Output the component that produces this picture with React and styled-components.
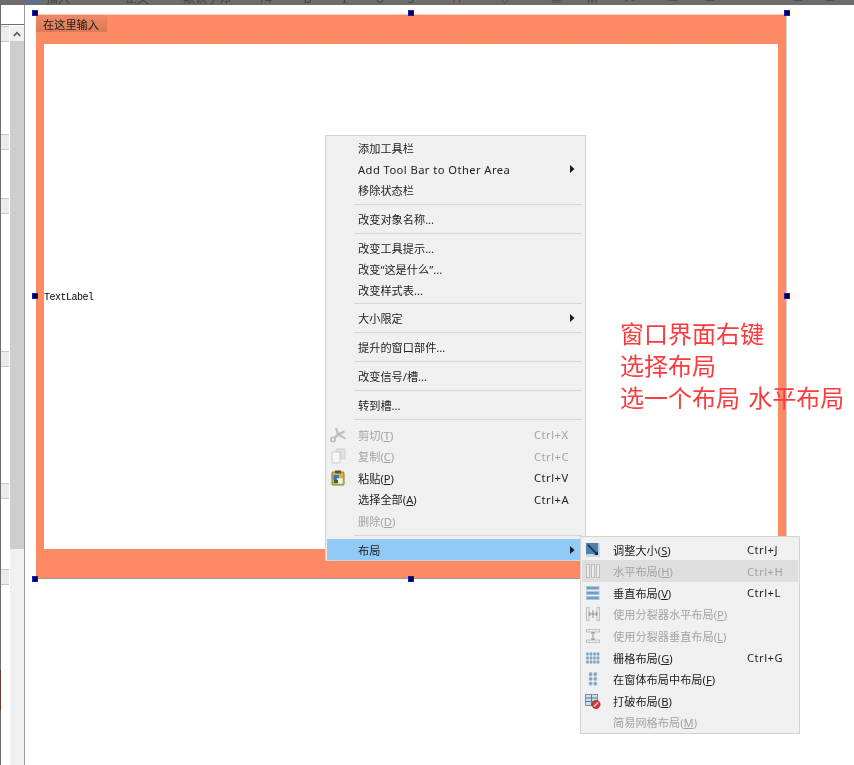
import React from "react";
import styled, { createGlobalStyle } from "styled-components";

const GlobalStyle = createGlobalStyle`
  html, body {
    margin: 0;
    padding: 0;
    background: #fff;
  }
  body {
    font-family: "Noto Sans", "Noto Sans CJK SC", sans-serif;
  }
`;

const Page = styled.div`
  position: relative;
  width: 854px;
  height: 765px;
  overflow: hidden;
  display: flex;
  flex-direction: column;
  background: #fff;
  filter: blur(0.3px);
`;

// ---- clipped toolbar at the very top
const TopBar = styled.div`
  flex: none;
  height: 5px;
  display: flex;
  align-items: flex-end;
  overflow: hidden;
  background: #6c6c6c;
  font-size: 12px;
  line-height: 14px;
`;

const TopItem = styled.span`
  flex: none;
  margin-left: ${(props) => props.$gap}px;
  margin-bottom: -1px;
  white-space: nowrap;
  color: ${(props) => props.$color || "#484848"};
`;

const TopDot = styled.span`
  flex: none;
  width: 15px;
  height: 15px;
  margin-left: 25px;
  border-radius: 50%;
  background: #5d6f8d;
`;

const Body = styled.div`
  flex: 1;
  display: flex;
  min-height: 0;
`;

// ---- left panel with scrollbar
const Sidebar = styled.div`
  flex: none;
  width: 25px;
  display: flex;
  flex-direction: column;
  border-left: 1px solid #6f6f6f;
  border-right: 1px solid #9a9a9a;
  box-sizing: border-box;
  margin-right: 1px;
  position: relative;
`;

const SideInput = styled.div`
  flex: none;
  height: 19px;
  background: #fff;
  border-bottom: 1px solid #6f6f6f;
  margin-bottom: 1px;
`;

const SideBody = styled.div`
  flex: 1;
  display: flex;
  min-height: 0;
`;

const TreeCol = styled.div`
  flex: none;
  width: 8px;
  display: flex;
  flex-direction: column;
`;

const TreeHead = styled.div`
  flex: none;
  height: 16px;
  margin-top: ${(props) => props.$top}px;
  background: #ececec;
  border-top: 1px solid #c8c8c8;
  border-bottom: 1px solid #c8c8c8;
  box-sizing: border-box;
`;

const Scroll = styled.div`
  flex: none;
  width: 14px;
  margin-left: 1px;
  display: flex;
  flex-direction: column;
  background: #f0f0f0;
`;

const ScrollUp = styled.div`
  flex: none;
  height: 15px;
  display: flex;
  align-items: center;
  justify-content: center;
  background: #f0f0f0;
`;

const ScrollThumb = styled.div`
  flex: none;
  height: 508px;
  background: #cdcdcd;
`;

const BrownMark = styled.div`
  position: absolute;
  left: -1px;
  top: 665px;
  width: 1px;
  height: 40px;
  background: #6e3a2c;
`;

// ---- designer canvas
const Canvas = styled.div`
  flex: 1;
  padding: 9px 0 0 10px;
`;

const Form = styled.div`
  position: relative;
  width: 751px;
  height: 565px;
  display: flex;
  flex-direction: column;
  box-sizing: border-box;
  background-color: #ff8a63;
  background-image:
    repeating-linear-gradient(90deg, #b9a59c 0 1px, transparent 1px 9.4px),
    repeating-linear-gradient(90deg, #c9a08e 0 1px, transparent 1px 9.4px);
  background-size: 100% 1px, 100% 1px;
  background-position: 0 21px, 0 538px;
  background-repeat: no-repeat;
  border-top: 1px solid #ffc7b2;
  border-right: 1px solid #cfcfcf;
  border-bottom: 1px solid #a09a98;
`;

const FormMenuBar = styled.div`
  flex: none;
  height: 29px;
`;

const FormMenuTitle = styled.div`
  width: 71px;
  height: 17px;
  box-sizing: border-box;
  padding-left: 7px;
  font-size: 11.2px;
  line-height: 19px;
  color: #1c1c1c;
  background: linear-gradient(180deg, #f08a66 0%, #d97a58 100%);
`;

const Central = styled.div`
  flex: 1;
  margin: 0 8px 29px 8px;
  padding-top: 2px;
  display: flex;
  align-items: center;
  background: #fff;
`;

const TextLabel = styled.span`
  font-family: "Liberation Mono", monospace;
  font-size: 10px;
  letter-spacing: -0.5px;
  color: #000;
`;

const Handle = styled.i`
  position: absolute;
  left: ${(props) => props.$x}px;
  top: ${(props) => props.$y}px;
  width: 4px;
  height: 4px;
  background: #000;
  border: 1px solid #1414e6;
`;

// ---- context menus
const Menu = styled.div`
  position: absolute;
  left: ${(props) => props.$left}px;
  top: ${(props) => props.$top}px;
  width: ${(props) => props.$width}px;
  height: ${(props) => props.$height}px;
  box-sizing: border-box;
  padding: ${(props) => props.$pad}px 1px 0;
  background: #f0f0f0;
  border: 1px solid #d2d2d2;
  color: #222;
  font-size: 11.2px;
`;

const Row = styled.div`
  display: grid;
  grid-template-columns: ${(props) => props.$cols};
  align-items: center;
  height: ${(props) => props.$h}px;
  white-space: nowrap;
  color: ${(props) => (props.$off ? "#a3a3a3" : "#222")};
  background: ${(props) =>
    props.$active ? "#91c9f7" : props.$hover ? "#dedede" : "transparent"};
`;

const IconCell = styled.span`
  display: flex;
  align-items: center;
  padding-left: 3px;
`;

const Latin = styled.span`
  letter-spacing: 0.43px;
`;

const Shortcut = styled.span`
  letter-spacing: 0.5px;
`;

const Arrow = styled.span`
  display: flex;
  justify-content: flex-start;
  padding-left: 3px;
`;

const SepWrap = styled.div`
  height: ${(props) => props.$space}px;
  margin: 0 2px 0 27px;
  display: flex;
  align-items: center;
`;

const SepLine = styled.div`
  flex: 1;
  height: 1px;
  background: #d6d6d6;
`;

const Note = styled.div`
  position: absolute;
  left: 620px;
  top: 318px;
  font-size: 24px;
  line-height: 32px;
  word-spacing: 2px;
  color: #fb3b3d;
  white-space: nowrap;
`;

// ---- icons
const Svg = ({ children }) => (
  <svg width="16" height="16" viewBox="0 0 16 16">
    {children}
  </svg>
);

const Triangle = () => (
  <svg width="5" height="8" viewBox="0 0 5 8">
    <path d="M0 0 L4.5 4 L0 8 Z" fill="#1a1a1a" />
  </svg>
);

const CutIcon = () => (
  <Svg>
    <circle cx="3" cy="12.5" r="2.2" fill="none" stroke="#bdbdbd" strokeWidth="1.7" />
    <path d="M6 1 L8 7.5 L15.5 11.5" fill="none" stroke="#c2c2c2" strokeWidth="2.2" />
    <path d="M14.5 4.5 L8 7.5 L4.5 11" fill="none" stroke="#bcbcbc" strokeWidth="2.2" />
  </Svg>
);

const CopyIcon = () => (
  <Svg>
    <path d="M6 1 H15 V11 H11 V4 H6 Z" fill="#e2e2e2" stroke="#d0d0d0" />
    <path d="M2 4 H10 V15 H2 Z" fill="#f6f6f6" stroke="#cdcdcd" />
  </Svg>
);

const PasteIcon = () => (
  <Svg>
    <rect x="2" y="2" width="12" height="13" rx="1" fill="#d6b545" stroke="#8e7a2b" />
    <rect x="5" y="0.5" width="6" height="3" fill="#5a5a3a" />
    <path d="M3.5 5 H9 V10 H3.5 Z" fill="#2f74c8" />
    <path d="M7 8 H13 V14 H7 Z" fill="#f3f1e2" stroke="#b3a76a" strokeWidth="0.6" />
    <path d="M4 10 H8 V13 H4 Z" fill="#2c6a3c" />
  </Svg>
);

const ResizeIcon = () => (
  <Svg>
    <rect x="1" y="1" width="14" height="14" fill="#c3d6e6" />
    <rect x="1" y="1" width="12" height="11" fill="#4f80a8" />
    <path d="M3 3 L12 12" stroke="#0d2a55" strokeWidth="1.6" />
    <path d="M13 9 V13 H9 Z" fill="#0d2a55" />
  </Svg>
);

const HLayoutIcon = () => (
  <Svg>
    {[1, 6, 11].map((x) => (
      <rect key={x} x={x + 0.5} y="1.5" width="3" height="13" fill="#ececec" stroke="#bcbcbc" />
    ))}
  </Svg>
);

const VLayoutIcon = () => (
  <Svg>
    {[1.5, 6.5, 11.5].map((y) => (
      <rect key={y} x="1.5" y={y} width="12.5" height="3" fill="#6f9fc8" stroke="#a9c4da" />
    ))}
  </Svg>
);

const HSplitIcon = () => (
  <Svg>
    <rect x="1.5" y="1.5" width="2.5" height="13" fill="#ececec" stroke="#c0c0c0" />
    <rect x="12" y="1.5" width="2.5" height="13" fill="#ececec" stroke="#c0c0c0" />
    <path d="M4.5 8 H11.5 M5 6 L4 8 L5 10 M11 6 L12 8 L11 10 M8 4 V12" stroke="#8f8f8f" fill="none" />
  </Svg>
);

const VSplitIcon = () => (
  <Svg>
    <rect x="1.5" y="1.5" width="13" height="2.5" fill="#ececec" stroke="#c0c0c0" />
    <rect x="1.5" y="12" width="13" height="2.5" fill="#ececec" stroke="#c0c0c0" />
    <path d="M8 4.5 V11.5 M6 5.5 L8 4 L10 5.5 M6 10.5 L8 12 L10 10.5" stroke="#8f8f8f" fill="none" />
  </Svg>
);

const GridIcon = () => (
  <Svg>
    {[2.5, 6.5, 10.5].map((y) =>
      [1.2, 4.7, 8.2, 11.7].map((x) => (
        <rect key={`${x}-${y}`} x={x} y={y} width="2.6" height="3" rx="1" fill="#7ea3c4" stroke="#a8c0d6" strokeWidth="0.5" />
      ))
    )}
  </Svg>
);

const FormIcon = () => (
  <Svg>
    {[1.5, 6.2, 10.9].map((y) =>
      [4, 8.7].map((x) => (
        <rect key={`${x}-${y}`} x={x} y={y} width="3.2" height="3.4" rx="1" fill="#7ea3c4" stroke="#a8c0d6" strokeWidth="0.5" />
      ))
    )}
  </Svg>
);

const BreakIcon = () => (
  <Svg>
    <rect x="0.5" y="1.5" width="12" height="11" fill="#cfdde9" stroke="#6f93b3" />
    <path d="M0.5 5 H12.5 M0.5 8.5 H12.5 M6.5 1.5 V12.5" stroke="#4f7da5" />
    <circle cx="11" cy="11.5" r="4.2" fill="#c63a3a" stroke="#8e2424" strokeWidth="0.5" />
    <path d="M8.8 13.5 L13.2 9.5" stroke="#f3d9d9" strokeWidth="1.2" />
  </Svg>
);

const mainCols = "31px 176px 33px 17px";
const subCols = "31px 134px 50px";

const mainItems = [
  { label: "添加工具栏" },
  { latin: "Add Tool Bar to Other Area", arrow: true },
  { label: "移除状态栏" },
  { sep: 7.8 },
  { label: "改变对象名称..." },
  { sep: 7.8 },
  { label: "改变工具提示..." },
  { label: "改变“这是什么”..." },
  { label: "改变样式表..." },
  { sep: 7.8 },
  { label: "大小限定", arrow: true },
  { sep: 7.8 },
  { label: "提升的窗口部件..." },
  { sep: 7.8 },
  { label: "改变信号/槽..." },
  { sep: 7.8 },
  { label: "转到槽..." },
  { sep: 8.9 },
  { label: "剪切", mn: "T", shortcut: "Ctrl+X", off: true, h: 21.5, icon: <CutIcon /> },
  { label: "复制", mn: "C", shortcut: "Ctrl+C", off: true, h: 21.5, icon: <CopyIcon /> },
  { label: "粘贴", mn: "P", shortcut: "Ctrl+V", h: 21.5, icon: <PasteIcon /> },
  { label: "选择全部", mn: "A", shortcut: "Ctrl+A", h: 21.5 },
  { label: "删除", mn: "D", off: true, h: 21.5 },
  { sep: 7.8 },
  { label: "布局", arrow: true, active: true },
];

const subItems = [
  { label: "调整大小", mn: "S", shortcut: "Ctrl+J", icon: <ResizeIcon /> },
  { label: "水平布局", mn: "H", shortcut: "Ctrl+H", off: true, hover: true, icon: <HLayoutIcon /> },
  { label: "垂直布局", mn: "V", shortcut: "Ctrl+L", icon: <VLayoutIcon /> },
  { label: "使用分裂器水平布局", mn: "P", off: true, icon: <HSplitIcon /> },
  { label: "使用分裂器垂直布局", mn: "L", off: true, icon: <VSplitIcon /> },
  { label: "栅格布局", mn: "G", shortcut: "Ctrl+G", icon: <GridIcon /> },
  { label: "在窗体布局中布局", mn: "F", icon: <FormIcon /> },
  { label: "打破布局", mn: "B", icon: <BreakIcon /> },
  { label: "简易网格布局", mn: "M", off: true },
];

// offsets are from the form's padding box
const handles = [
  [-4, -5], [372, -5], [748, -5],
  [-4, 278], [748, 278],
  [-4, 561], [372, 561], [748, 561],
];

const treeHeads = [0, 92, 48, 137, 116, 70];

function MenuRows({ items, cols, height }) {
  return items.map((item, i) =>
    item.sep ? (
      <SepWrap key={i} $space={item.sep}>
        <SepLine />
      </SepWrap>
    ) : (
      <Row key={i} $cols={cols} $h={item.h || height} $off={item.off} $active={item.active} $hover={item.hover}>
        <IconCell>{item.icon}</IconCell>
        <span>
          {item.latin ? <Latin>{item.latin}</Latin> : item.label}
          {item.mn && (
            <>
              (<u>{item.mn}</u>)
            </>
          )}
        </span>
        <Shortcut>{item.shortcut}</Shortcut>
        {item.arrow && (
          <Arrow>
            <Triangle />
          </Arrow>
        )}
      </Row>
    )
  );
}

function App() {
  return (
    <Page>
      <GlobalStyle />
      <TopBar>
        <TopDot />
        <TopItem $gap={6}>插入</TopItem>
        <TopItem $gap={55}>正文</TopItem>
        <TopItem $gap={34}>默认字体</TopItem>
        <TopItem $gap={27}>14</TopItem>
        <TopItem $gap={32}>B</TopItem>
        <TopItem $gap={31}>I</TopItem>
        <TopItem $gap={29}>U</TopItem>
        <TopItem $gap={23}>S</TopItem>
        <TopItem $gap={39} $color="#7a3a34">A</TopItem>
        <TopItem $gap={38}>◇</TopItem>
        <TopItem $gap={40}>▦</TopItem>
        <TopItem $gap={24}>M</TopItem>
        <TopItem $gap={26}>∞</TopItem>
        <TopItem $gap={31}>≡</TopItem>
        <TopItem $gap={25}>≡</TopItem>
        <TopItem $gap={23}>▪</TopItem>
        <TopItem $gap={41}>≡</TopItem>
        <TopItem $gap={21}>≡</TopItem>
      </TopBar>
      <Body>
        <Sidebar>
          <SideInput />
          <SideBody>
            <TreeCol>
              {treeHeads.map((top, i) => (
                <TreeHead key={i} $top={top} />
              ))}
            </TreeCol>
            <Scroll>
              <ScrollUp>
                <svg width="8" height="6" viewBox="0 0 8 6">
                  <path d="M0.8 5 L4 1.6 L7.2 5" fill="none" stroke="#555" strokeWidth="1.6" />
                </svg>
              </ScrollUp>
              <ScrollThumb />
            </Scroll>
          </SideBody>
          <BrownMark />
        </Sidebar>
        <Canvas>
          <Form>
            <FormMenuBar>
              <FormMenuTitle>在这里输入</FormMenuTitle>
            </FormMenuBar>
            <Central>
              <TextLabel>TextLabel</TextLabel>
            </Central>
            {handles.map(([x, y]) => (
              <Handle key={`${x}-${y}`} $x={x} $y={y} />
            ))}
          </Form>
        </Canvas>
      </Body>
      <Menu $left={325} $top={135} $width={261} $height={426} $pad={1.5}>
        <MenuRows items={mainItems} cols={mainCols} height={21} />
      </Menu>
      <Menu $left={580} $top={536} $width={220} $height={198} $pad={1.8}>
        <MenuRows items={subItems} cols={subCols} height={21.6} />
      </Menu>
      <Note>
        窗口界面右键
        <br />
        选择布局
        <br />
        选一个布局 水平布局
      </Note>
    </Page>
  );
}

export default App;
